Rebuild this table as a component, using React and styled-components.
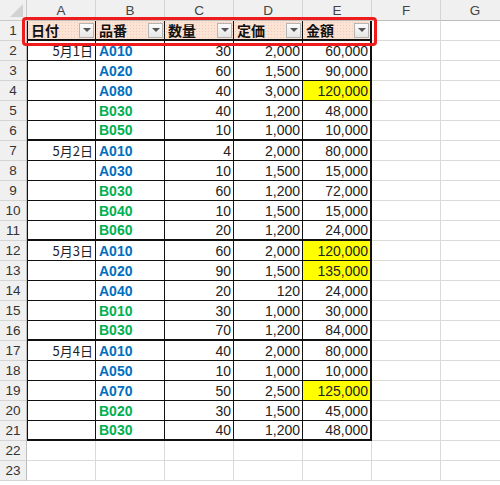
import React from 'react';
import styled, { createGlobalStyle } from 'styled-components';

const GlobalStyle = createGlobalStyle`
  html, body { margin: 0; padding: 0; background: #ffffff; }
  body { font-family: "Liberation Sans", "Noto Sans CJK JP", sans-serif; }
`;

const COLS = ['A', 'B', 'C', 'D', 'E', 'F', 'G'];
const HEADERS = ['日付', '品番', '数量', '定価', '金額'];

// date, code, qty, price, amount, highlight
const ROWS = [
  ['5月1日', 'A010', '30', '2,000', '60,000'],
  ['', 'A020', '60', '1,500', '90,000'],
  ['', 'A080', '40', '3,000', '120,000', true],
  ['', 'B030', '40', '1,200', '48,000'],
  ['', 'B050', '10', '1,000', '10,000'],
  ['5月2日', 'A010', '4', '2,000', '80,000'],
  ['', 'A030', '10', '1,500', '15,000'],
  ['', 'B030', '60', '1,200', '72,000'],
  ['', 'B040', '10', '1,500', '15,000'],
  ['', 'B060', '20', '1,200', '24,000'],
  ['5月3日', 'A010', '60', '2,000', '120,000', true],
  ['', 'A020', '90', '1,500', '135,000', true],
  ['', 'A040', '20', '120', '24,000'],
  ['', 'B010', '30', '1,000', '30,000'],
  ['', 'B030', '70', '1,200', '84,000'],
  ['5月4日', 'A010', '40', '2,000', '80,000'],
  ['', 'A050', '10', '1,000', '10,000'],
  ['', 'A070', '50', '2,500', '125,000', true],
  ['', 'B020', '30', '1,500', '45,000'],
  ['', 'B030', '40', '1,200', '48,000'],
];

/** ********************************************* */
// Sheet with an auto-filter table
/** ********************************************* */
export default function App() {
  return (
    <>
      <GlobalStyle />
      <Sheet>
        <Grid>
          <Corner><CornerMark /></Corner>
          {COLS.map((c) => (
            <ColHead key={c}>{c}</ColHead>
          ))}

          <RowHead>1</RowHead>
          {HEADERS.map((h, i) => (
            <HeadCell key={h} first={i === 0} last={i === 4}>
              <span>{h}</span>
              <FilterButton><Arrow /></FilterButton>
            </HeadCell>
          ))}
          <Cell />
          <Cell />

          {ROWS.map((r, idx) => {
            const rowNo = idx + 2;
            const groupEnd = rowNo % 5 === 1 || rowNo === 21;
            const [date, code, qty, price, amount, hl] = r;
            return (
              <React.Fragment key={rowNo}>
                <RowHead>{rowNo}</RowHead>
                <DataCell first thick={groupEnd} align="right">
                  <DateText>{date}</DateText>
                </DataCell>
                <DataCell thick={groupEnd}>
                  <Code kind={code[0]}>{code}</Code>
                </DataCell>
                <DataCell thick={groupEnd} align="right">{qty}</DataCell>
                <DataCell thick={groupEnd} align="right">{price}</DataCell>
                <DataCell thick={groupEnd} last align="right" highlight={hl}>{amount}</DataCell>
                <Cell />
                <Cell />
              </React.Fragment>
            );
          })}

          {[22, 23].map((n) => (
            <React.Fragment key={n}>
              <RowHead>{n}</RowHead>
              {COLS.map((c) => <Cell key={c} />)}
            </React.Fragment>
          ))}
        </Grid>
        <Marker />
      </Sheet>
    </>
  );
}

// Styling
const Sheet = styled.div`
  position: relative;
  width: 500px;
  height: 485px;
  overflow: hidden;
  background: #ffffff;
`;

const Grid = styled.div`
  display: grid;
  grid-template-columns: 27px repeat(7, 69px);
  grid-template-rows: 21px repeat(23, 20px);
  font-size: 14px;
  color: #222;
`;

const Corner = styled.div`
  position: relative;
  background: #f0f0f0;
  border-right: 1px solid #c8c8c8;
  border-bottom: 1px solid #c8c8c8;
  box-sizing: border-box;
`;

const CornerMark = styled.div`
  position: absolute;
  right: 3px;
  bottom: 3px;
  width: 0;
  height: 0;
  border-left: 13px solid transparent;
  border-bottom: 13px solid #d2d2d2;
`;

const ColHead = styled.div`
  display: flex;
  align-items: center;
  justify-content: center;
  background: #f0f0f0;
  border-right: 1px solid #d4d4d4;
  border-bottom: 1px solid #bdbdbd;
  box-sizing: border-box;
  color: #444;
  font-size: 13.5px;
`;

const RowHead = styled.div`
  display: flex;
  align-items: center;
  justify-content: center;
  background: #f0f0f0;
  border-right: 1px solid #bdbdbd;
  border-bottom: 1px solid #d4d4d4;
  box-sizing: border-box;
  color: #333;
  font-size: 13.5px;
`;

const Cell = styled.div`
  border-right: 1px solid #dadada;
  border-bottom: 1px solid #dadada;
  box-sizing: border-box;
`;

const HeadCell = styled.div`
  display: flex;
  align-items: center;
  justify-content: space-between;
  padding: 0 1px 0 3px;
  background-color: #fbe3d6;
  background-image: radial-gradient(#f3c9b3 0.6px, transparent 0.8px);
  background-size: 3px 3px;
  border-right: ${(p) => (p.last ? '2px' : '1px')} solid #111;
  border-left: ${(p) => (p.first ? '1px solid #111' : 'none')};
  border-bottom: 2px solid #111;
  box-sizing: border-box;
  font-family: "Noto Sans CJK JP", sans-serif;
  font-weight: 700;
  font-size: 14px;
  color: #111;
`;

const FilterButton = styled.div`
  display: flex;
  align-items: center;
  justify-content: center;
  width: 15px;
  height: 15px;
  background: linear-gradient(#fbfbfb, #e6e6e6);
  border: 1px solid #b4b4b4;
  box-sizing: border-box;
`;

const Arrow = styled.div`
  width: 0;
  height: 0;
  border-left: 4px solid transparent;
  border-right: 4px solid transparent;
  border-top: 4px solid #555;
`;

const DataCell = styled.div`
  display: flex;
  align-items: center;
  justify-content: ${(p) => (p.align === 'right' ? 'flex-end' : 'flex-start')};
  padding: 0 2px 0 3px;
  background: ${(p) => (p.highlight ? '#ffff00' : '#ffffff')};
  border-left: ${(p) => (p.first ? '1px solid #111' : 'none')};
  border-right: ${(p) => (p.last ? '2px' : '1px')} solid #111;
  border-bottom: ${(p) => (p.thick ? '2px' : '1px')} solid #111;
  box-sizing: border-box;
  font-family: "Liberation Sans", sans-serif;
  font-size: 14px;
  color: #222;
`;

const DateText = styled.span`
  font-family: "Noto Sans CJK JP", sans-serif;
  font-size: 13px;
  color: #222;
`;

const Code = styled.span`
  font-weight: 700;
  color: ${(p) => (p.kind === 'A' ? '#0070c0' : '#00b050')};
`;

const Marker = styled.div`
  position: absolute;
  left: 22px;
  top: 17px;
  width: 355px;
  height: 29px;
  border: 3px solid #ee1c1c;
  border-radius: 4px;
  box-sizing: border-box;
  pointer-events: none;
`;
